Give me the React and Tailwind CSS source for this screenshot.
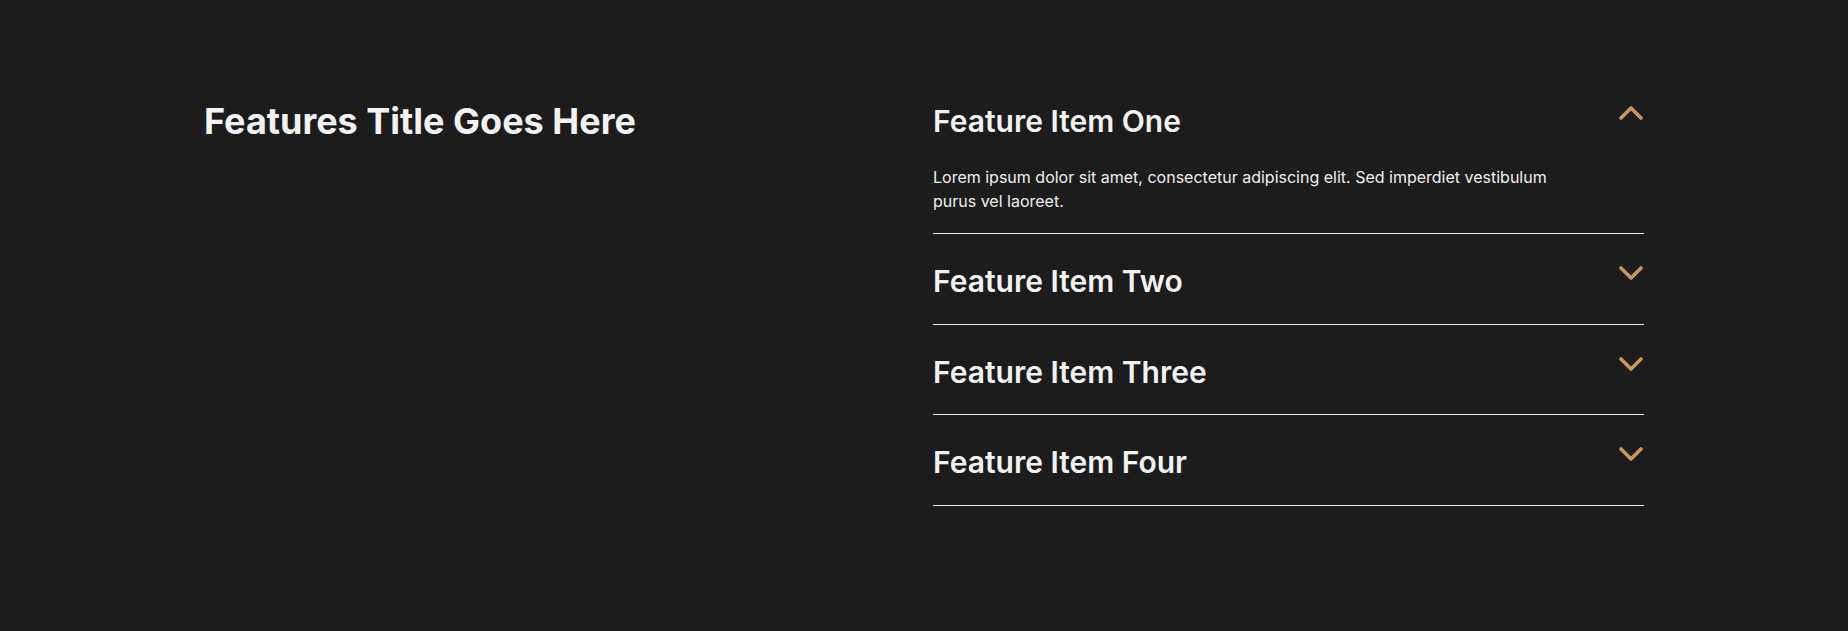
const items = [
  {
    title: "Feature Item One",
    body: "Lorem ipsum dolor sit amet, consectetur adipiscing elit. Sed imperdiet vestibulum purus vel laoreet.",
    open: true,
  },
  { title: "Feature Item Two", open: false },
  { title: "Feature Item Three", open: false },
  { title: "Feature Item Four", open: false },
];

// chevron drawn by hand: the stroke is heavier than the icon sets
const Chevron = ({ up }) => (
  <svg
    width="24"
    height="14"
    viewBox="0 0 24 14"
    fill="none"
    stroke="#c9975b"
    strokeWidth="3.6"
    strokeLinecap="round"
    strokeLinejoin="round"
    className="mt-[13px] mr-[1px] shrink-0"
  >
    <path d={up ? "M2 12 L12 2 L22 12" : "M2 2 L12 12 L22 2"} />
  </svg>
);

const FeatureItem = ({ title, body, open }) => {
  return (
    <div
      className={
        open
          ? "border-b border-[#e8e8e8] pt-[19px] pb-[20px]"
          : "border-b border-[#e8e8e8] pt-[19px] pb-[24.5px]"
      }
    >
      <div className="flex items-start justify-between">
        <h3 className="pt-[10px] text-[30px] font-semibold leading-9 text-[#f2f2f2]">
          {title}
        </h3>
        <Chevron up={open} />
      </div>
      {open && (
        <p className="max-w-[640px] pt-[26px] text-base leading-6 text-[#f0f0f0]">
          {body}
        </p>
      )}
    </div>
  );
};

const App = () => {
  return (
    <div className="min-h-screen bg-[#1c1c1c] font-['Inter',sans-serif]">
      <div className="mx-auto flex w-[1440px] pt-[74px]">
        <div className="flex-1 pt-[25px]">
          <h2 className="text-[36px] font-bold leading-[44px] text-[#f2f2f2]">
            Features Title Goes Here
          </h2>
        </div>
        <div className="w-[711px]">
          {items.map((item) => (
            <FeatureItem key={item.title} {...item} />
          ))}
        </div>
      </div>
    </div>
  );
};

export default App;
